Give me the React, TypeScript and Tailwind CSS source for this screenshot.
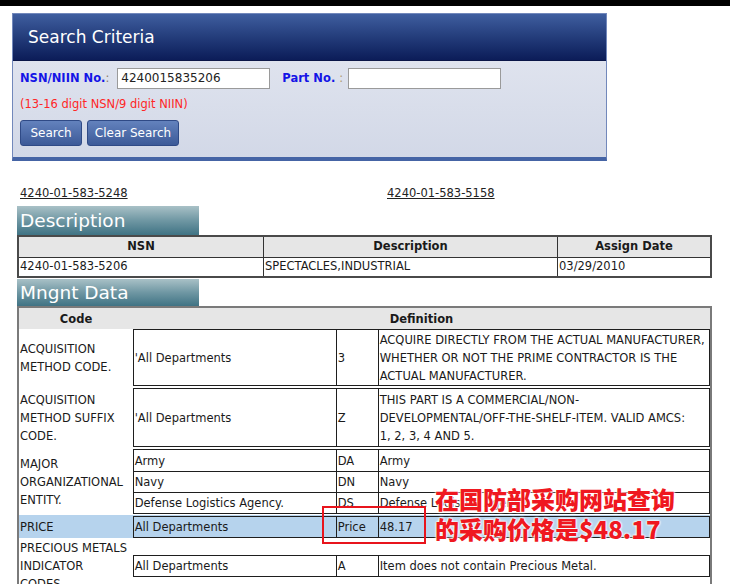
import React from "react";

const font = "font-['DejaVu_Sans',sans-serif]";

function Tab({ label, h }: { label: string; h: string }) {
  return (
    <div className={`w-[182px] ${h} flex items-center bg-gradient-to-b from-[#a9c1c7] via-[#6f97a3] to-[#3f7384] text-white text-[18.5px] pl-[3px]`}>
      {label}
    </div>
  );
}

type Row = { dept: string; code: string; def: React.ReactNode; h: string };

function Inner({ rows, hl }: { rows: Row[]; hl?: boolean }) {
  return (
    <div className={`w-[579px] border border-[#1e1e1e] ${hl ? "bg-[#b6d3ed]" : "bg-white"}`}>
      {rows.map((r, i) => (
        <div
          key={i}
          className={`grid grid-cols-[202px_42px_1fr] ${r.h} ${i > 0 ? "border-t border-[#1e1e1e]" : ""}`}
        >
          <div className="flex items-center pl-[1px]">{r.dept}</div>
          <div className="flex items-center pl-[1px] border-l border-[#1e1e1e]">{r.code}</div>
          <div className="flex items-center pl-[1px] border-l border-[#1e1e1e] whitespace-nowrap">{r.def}</div>
        </div>
      ))}
    </div>
  );
}

export default function App() {
  return (
    <div className={`relative w-[730px] h-[584px] overflow-hidden bg-white text-[11.5px] text-[#1a1a1a] ${font}`}>
      <div className="h-[6px] bg-black" />

      {/* search panel */}
      <div className="ml-[12px] mt-[7px] w-[595px] border border-[#7288bb] border-b-[4px] border-b-[#4564a5]">
        <div className="h-[47px] bg-gradient-to-b from-[#3f5e9f] to-[#0c1c58] text-white text-[17px] leading-[47px] pl-[15px] border-b border-[#0a1547]">
          Search Criteria
        </div>
        <div className="h-[96px] bg-gradient-to-b from-[#dfe3ee] to-[#d2d8e7] pl-[7px] pt-[7px]">
          <div className="flex items-center h-[21px]">
            <span className="font-bold text-[#1414e6]">NSN/NIIN No.</span>
            <span className="text-[#8a7a6a]">:</span>
            <div className="ml-[8px] w-[153px] h-[21px] bg-white border border-[#9a9a9a] leading-[19px] pl-[3px] text-[12px] text-[#222]">
              4240015835206
            </div>
            <span className="ml-[12px] font-bold text-[#1414e6]">Part No.</span>
            <span className="text-[#b09a70] ml-[4px]">:</span>
            <div className="ml-[5px] w-[153px] h-[21px] bg-white border border-[#9a9a9a]" />
          </div>
          <div className="mt-[8px] text-[#ff2626] leading-[14px]">(13-16 digit NSN/9 digit NIIN)</div>
          <div className="mt-[9px] flex gap-[5px]">
            <button className="w-[62px] h-[26px] rounded-[3px] border border-[#2f4a86] bg-gradient-to-b from-[#6382bd] to-[#3d5a98] text-white text-[12px]">
              Search
            </button>
            <button className="w-[92px] h-[26px] rounded-[3px] border border-[#2f4a86] bg-gradient-to-b from-[#6382bd] to-[#3d5a98] text-white text-[12px]">
              Clear Search
            </button>
          </div>
        </div>
      </div>

      {/* content */}
      <div className="pl-[17px]">
        <div className="flex h-[45px] pt-[24px] text-[#222]">
          <a className="ml-[3px] underline w-[367px]">4240-01-583-5248</a>
          <a className="underline">4240-01-583-5158</a>
        </div>

        <Tab label="Description" h="h-[29px]" />
        <div className="w-[695px] border-2 border-[#4a4a4a]">
          <div className="grid grid-cols-[244px_294px_1fr] h-[20px] bg-[#e6e6e6] font-bold">
            <div className="flex items-center justify-center">NSN</div>
            <div className="flex items-center justify-center border-l border-[#333]">Description</div>
            <div className="flex items-center justify-center border-l border-[#333]">Assign Date</div>
          </div>
          <div className="grid grid-cols-[244px_294px_1fr] h-[19px] border-t border-[#333]">
            <div className="flex items-center pl-[1px]">4240-01-583-5206</div>
            <div className="flex items-center pl-[1px] border-l border-[#333]">SPECTACLES,INDUSTRIAL</div>
            <div className="flex items-center pl-[1px] border-l border-[#333]">03/29/2010</div>
          </div>
        </div>

        <div className="mt-[1px]">
          <Tab label="Mngnt Data" h="h-[27px]" />
        </div>
        <div className="w-[695px] border-2 border-[#7a7a7a] leading-[18px]">
          <div className="grid grid-cols-[114px_1fr] h-[21px] bg-[#e6e6e6] font-bold">
            <div className="flex items-center justify-center">Code</div>
            <div className="flex items-center justify-center">Definition</div>
          </div>

          <div className="flex items-center pb-[1px]">
            <div className="w-[114px] pl-[1px]">ACQUISITION<br />METHOD CODE.</div>
            <Inner
              rows={[
                {
                  dept: "'All Departments",
                  code: "3",
                  h: "h-[55px]",
                  def: (
                    <div>
                      ACQUIRE DIRECTLY FROM THE ACTUAL MANUFACTURER,<br />
                      WHETHER OR NOT THE PRIME CONTRACTOR IS THE<br />
                      ACTUAL MANUFACTURER.
                    </div>
                  ),
                },
              ]}
            />
          </div>

          <div className="flex items-center py-[1px]">
            <div className="w-[114px] pl-[1px]">ACQUISITION<br />METHOD SUFFIX<br />CODE.</div>
            <Inner
              rows={[
                {
                  dept: "'All Departments",
                  code: "Z",
                  h: "h-[57px]",
                  def: (
                    <div>
                      THIS PART IS A COMMERCIAL/NON-<br />
                      DEVELOPMENTAL/OFF-THE-SHELF-ITEM. VALID AMCS:<br />
                      1, 2, 3, 4 AND 5.
                    </div>
                  ),
                },
              ]}
            />
          </div>

          <div className="flex items-center py-[1px]">
            <div className="w-[114px] pl-[1px]">MAJOR<br />ORGANIZATIONAL<br />ENTITY.</div>
            <Inner
              rows={[
                { dept: "Army", code: "DA", def: "Army", h: "h-[21px]" },
                { dept: "Navy", code: "DN", def: "Navy", h: "h-[21px]" },
                { dept: "Defense Logistics Agency.", code: "DS", def: "Defense Logistics Agency.", h: "h-[21px]" },
              ]}
            />
          </div>

          <div className="flex items-center h-[23px] bg-[#b6d3ed]">
            <div className="w-[114px] pl-[1px]">PRICE</div>
            <Inner hl rows={[{ dept: "All Departments", code: "Price", def: "48.17", h: "h-[20px]" }]} />
          </div>

          <div className="flex items-center py-[1px]">
            <div className="w-[114px] pl-[1px]">PRECIOUS METALS<br />INDICATOR<br />CODES.</div>
            <Inner rows={[{ dept: "All Departments", code: "A", def: "Item does not contain Precious Metal.", h: "h-[20px]" }]} />
          </div>
        </div>
      </div>

      {/* annotation overlay */}
      <div className="absolute left-[322px] top-[506px] w-[104px] h-[38px] border-2 border-[#e8141c]" />
      <div className="absolute left-[435px] top-[484px] font-['Noto_Sans_CJK_SC',sans-serif] font-black text-[24px] leading-[30px] text-[#ef1820] [text-shadow:0_0_2px_#fff,0_0_2px_#fff,0_0_3px_#fff]">
        在国防部采购网站查询
        <br />
        的采购价格是$48.17
      </div>
    </div>
  );
}
